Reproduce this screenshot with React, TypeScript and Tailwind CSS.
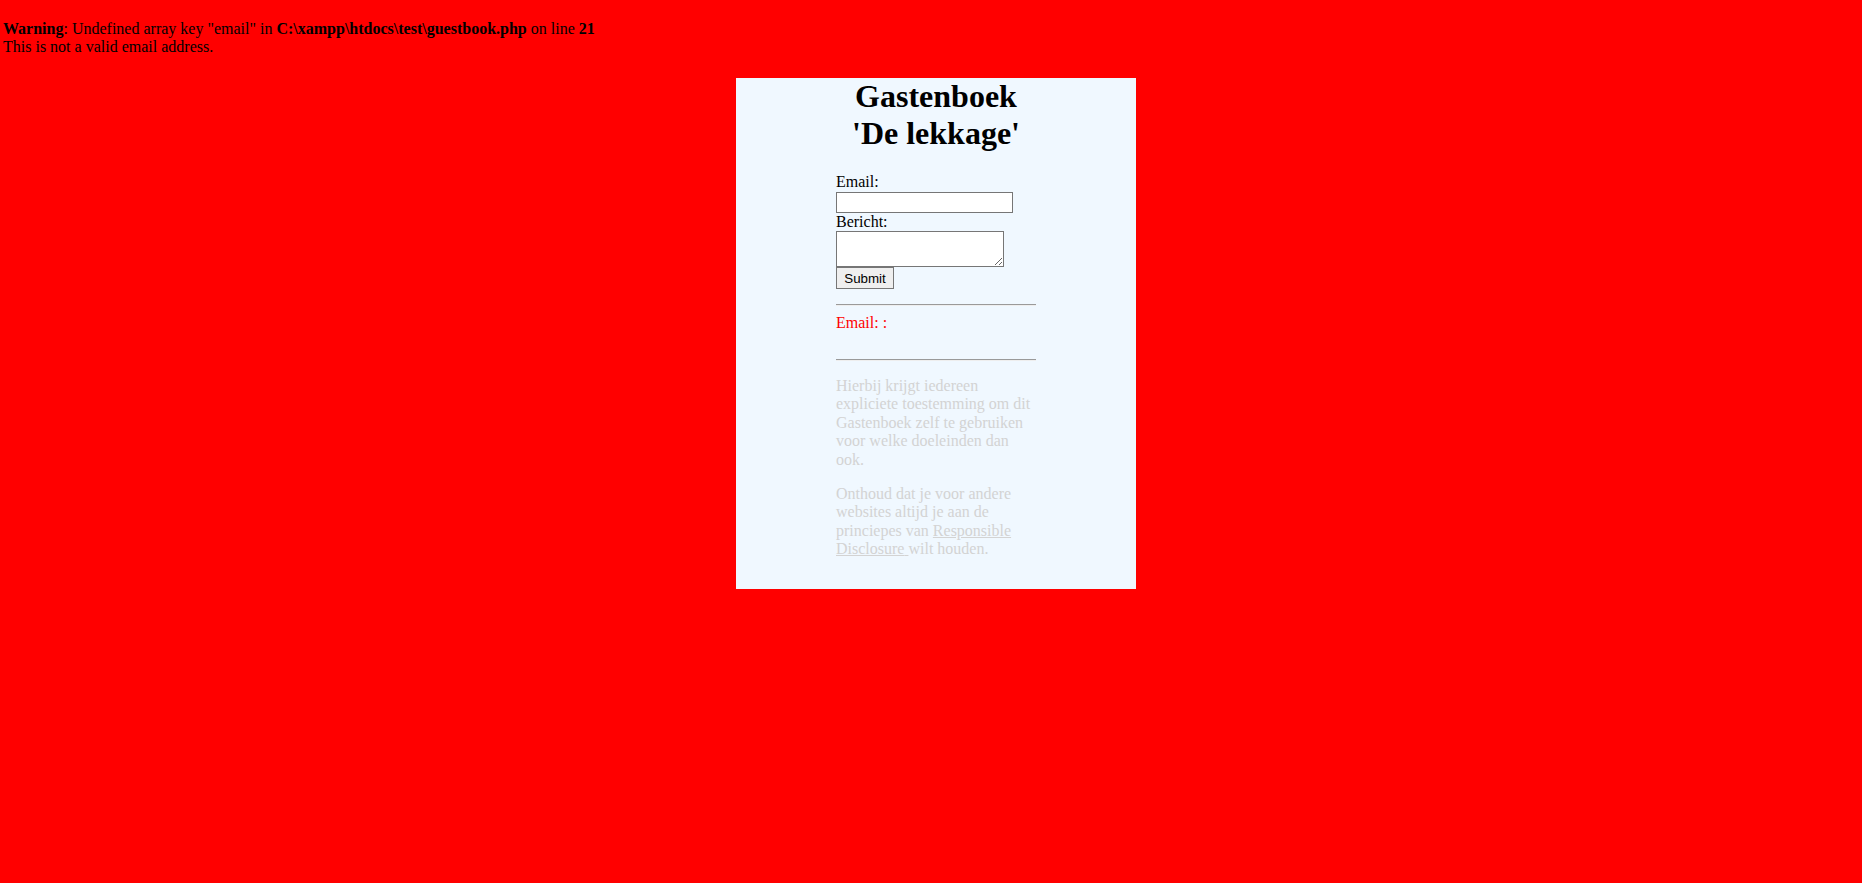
const serif = "font-['Liberation_Serif','Times_New_Roman',serif]"

export default function App() {
  return (
    <div className={`min-h-screen bg-[#ff0000] pt-[2px] pl-[3px] text-[16px] text-black ${serif}`}>
      <div className="leading-[17.8px]">
        <br />
        <b>Warning</b>: Undefined array key "email" in <b>C:\xampp\htdocs\test\guestbook.php</b> on line <b>21</b>
        <br />
        This is not a valid email address.
      </div>

      <div className="ml-[733px] mt-[23px] w-[400px] bg-[#f0f8ff] pb-[30px]">
        <h1 className="mb-[21px] text-center text-[32px] font-bold leading-[37px]">
          Gastenboek
          <br />
          'De lekkage'
        </h1>

        <div className="ml-[100px] w-[200px] leading-[18.4px]">
          <form className="flex flex-col items-start" onSubmit={(e) => e.preventDefault()}>
            <label htmlFor="email">Email:</label>
            <input
              id="email"
              type="text"
              className="h-[21px] w-[177px] border border-[#767676] bg-white px-[2px] text-[13px]"
            />
            <label htmlFor="bericht">Bericht:</label>
            <textarea
              id="bericht"
              className="h-[36px] w-[168px] resize border border-[#767676] bg-white"
            />
            <button
              type="submit"
              className="h-[22px] w-[58px] border border-[#767676] bg-[#efefef] font-['Liberation_Sans',Arial,sans-serif] text-[13.33px] leading-none"
            >
              Submit
            </button>
          </form>

          <hr className="mt-[15px] mb-2 border-t border-b border-t-[#9a9a9a] border-b-[#eeeeee]" />
          <div className="text-[#ff0000]">
            Email: :
            <br />
            <br />
          </div>
          <hr className="my-2 border-t border-b border-t-[#9a9a9a] border-b-[#eeeeee]" />

          <div className="text-[#d3d3d3]">
            <p className="mt-4">
              Hierbij krijgt iedereen expliciete toestemming om dit Gastenboek zelf te gebruiken voor welke doeleinden dan ook.
            </p>
            <p className="mt-4">
              Onthoud dat je voor andere websites altijd je aan de princiepes van{" "}
              <a href="#" className="underline">
                Responsible Disclosure{" "}
              </a>
              wilt houden.
            </p>
          </div>
        </div>
      </div>
    </div>
  )
}
